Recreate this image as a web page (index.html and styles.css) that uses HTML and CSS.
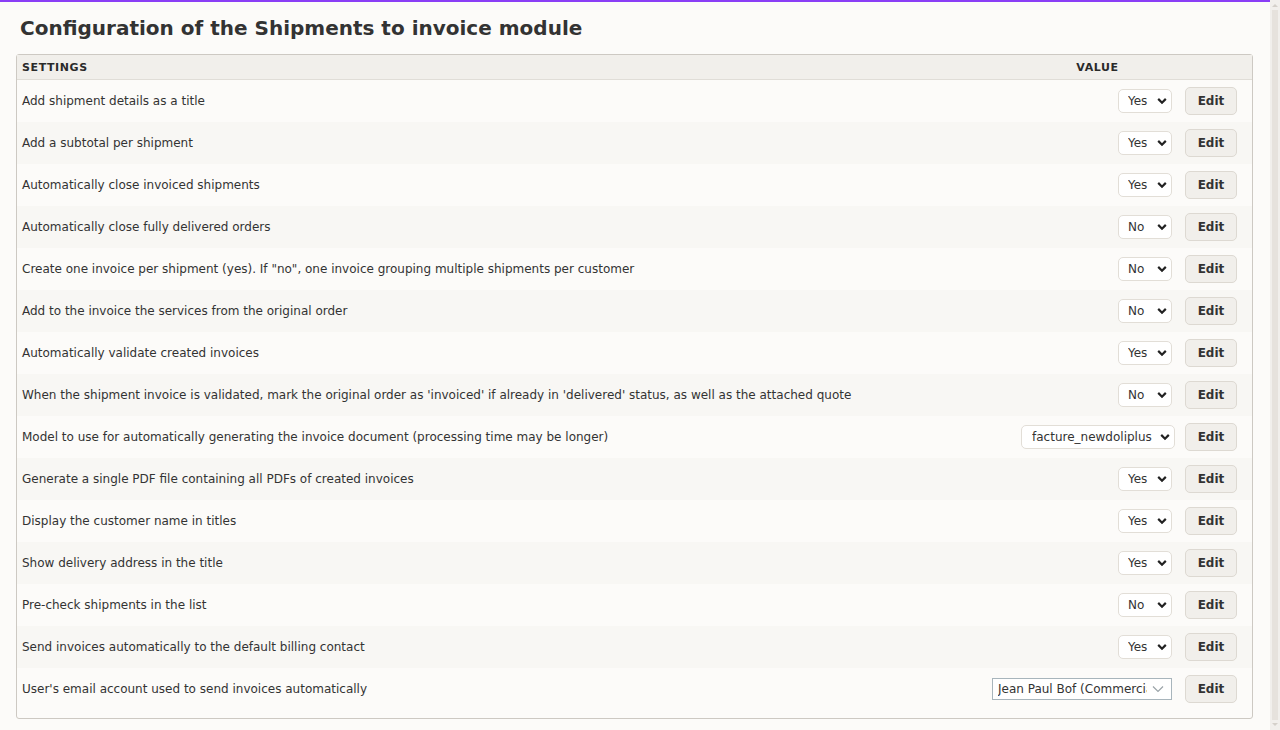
FILE: index.html
```html
<!DOCTYPE html>
<html lang="en">
<head>
<meta charset="utf-8">
<title>Configuration of the Shipments to invoice module</title>
<link rel="stylesheet" href="styles.css">
</head>
<body>
<div class="page">
  <main class="main">
    <h1 class="title">Configuration of the Shipments to invoice module</h1>
    <div class="box">
      <div class="thead">
        <div class="th th-label">Settings</div>
        <div class="th th-value">Value</div>
        <div class="th"></div>
      </div>

      <div class="row">
        <div class="label">Add shipment details as a title</div>
        <div class="value"><span class="sel"><select class="yn"><option>Yes</option><option>No</option></select><svg class="chev" width="10" height="7" viewBox="0 0 10 7"><path d="M1.2 1.4 5 5.2 8.8 1.4" fill="none" stroke="#222" stroke-width="2.2"/></svg></span></div>
        <div class="edit"><button class="btn">Edit</button></div>
      </div>
      <div class="row">
        <div class="label">Add a subtotal per shipment</div>
        <div class="value"><span class="sel"><select class="yn"><option>Yes</option><option>No</option></select><svg class="chev" width="10" height="7" viewBox="0 0 10 7"><path d="M1.2 1.4 5 5.2 8.8 1.4" fill="none" stroke="#222" stroke-width="2.2"/></svg></span></div>
        <div class="edit"><button class="btn">Edit</button></div>
      </div>
      <div class="row">
        <div class="label">Automatically close invoiced shipments</div>
        <div class="value"><span class="sel"><select class="yn"><option>Yes</option><option>No</option></select><svg class="chev" width="10" height="7" viewBox="0 0 10 7"><path d="M1.2 1.4 5 5.2 8.8 1.4" fill="none" stroke="#222" stroke-width="2.2"/></svg></span></div>
        <div class="edit"><button class="btn">Edit</button></div>
      </div>
      <div class="row">
        <div class="label">Automatically close fully delivered orders</div>
        <div class="value"><span class="sel"><select class="yn"><option>No</option><option>Yes</option></select><svg class="chev" width="10" height="7" viewBox="0 0 10 7"><path d="M1.2 1.4 5 5.2 8.8 1.4" fill="none" stroke="#222" stroke-width="2.2"/></svg></span></div>
        <div class="edit"><button class="btn">Edit</button></div>
      </div>
      <div class="row">
        <div class="label">Create one invoice per shipment (yes). If "no", one invoice grouping multiple shipments per customer</div>
        <div class="value"><span class="sel"><select class="yn"><option>No</option><option>Yes</option></select><svg class="chev" width="10" height="7" viewBox="0 0 10 7"><path d="M1.2 1.4 5 5.2 8.8 1.4" fill="none" stroke="#222" stroke-width="2.2"/></svg></span></div>
        <div class="edit"><button class="btn">Edit</button></div>
      </div>
      <div class="row">
        <div class="label">Add to the invoice the services from the original order</div>
        <div class="value"><span class="sel"><select class="yn"><option>No</option><option>Yes</option></select><svg class="chev" width="10" height="7" viewBox="0 0 10 7"><path d="M1.2 1.4 5 5.2 8.8 1.4" fill="none" stroke="#222" stroke-width="2.2"/></svg></span></div>
        <div class="edit"><button class="btn">Edit</button></div>
      </div>
      <div class="row">
        <div class="label">Automatically validate created invoices</div>
        <div class="value"><span class="sel"><select class="yn"><option>Yes</option><option>No</option></select><svg class="chev" width="10" height="7" viewBox="0 0 10 7"><path d="M1.2 1.4 5 5.2 8.8 1.4" fill="none" stroke="#222" stroke-width="2.2"/></svg></span></div>
        <div class="edit"><button class="btn">Edit</button></div>
      </div>
      <div class="row">
        <div class="label">When the shipment invoice is validated, mark the original order as 'invoiced' if already in 'delivered' status, as well as the attached quote</div>
        <div class="value"><span class="sel"><select class="yn"><option>No</option><option>Yes</option></select><svg class="chev" width="10" height="7" viewBox="0 0 10 7"><path d="M1.2 1.4 5 5.2 8.8 1.4" fill="none" stroke="#222" stroke-width="2.2"/></svg></span></div>
        <div class="edit"><button class="btn">Edit</button></div>
      </div>
      <div class="row">
        <div class="label">Model to use for automatically generating the invoice document (processing time may be longer)</div>
        <div class="value value-wide"><span class="sel"><select class="model"><option>facture_newdoliplus</option></select><svg class="chev" width="10" height="7" viewBox="0 0 10 7"><path d="M1.2 1.4 5 5.2 8.8 1.4" fill="none" stroke="#222" stroke-width="2.2"/></svg></span></div>
        <div class="edit"><button class="btn">Edit</button></div>
      </div>
      <div class="row">
        <div class="label">Generate a single PDF file containing all PDFs of created invoices</div>
        <div class="value"><span class="sel"><select class="yn"><option>Yes</option><option>No</option></select><svg class="chev" width="10" height="7" viewBox="0 0 10 7"><path d="M1.2 1.4 5 5.2 8.8 1.4" fill="none" stroke="#222" stroke-width="2.2"/></svg></span></div>
        <div class="edit"><button class="btn">Edit</button></div>
      </div>
      <div class="row">
        <div class="label">Display the customer name in titles</div>
        <div class="value"><span class="sel"><select class="yn"><option>Yes</option><option>No</option></select><svg class="chev" width="10" height="7" viewBox="0 0 10 7"><path d="M1.2 1.4 5 5.2 8.8 1.4" fill="none" stroke="#222" stroke-width="2.2"/></svg></span></div>
        <div class="edit"><button class="btn">Edit</button></div>
      </div>
      <div class="row">
        <div class="label">Show delivery address in the title</div>
        <div class="value"><span class="sel"><select class="yn"><option>Yes</option><option>No</option></select><svg class="chev" width="10" height="7" viewBox="0 0 10 7"><path d="M1.2 1.4 5 5.2 8.8 1.4" fill="none" stroke="#222" stroke-width="2.2"/></svg></span></div>
        <div class="edit"><button class="btn">Edit</button></div>
      </div>
      <div class="row">
        <div class="label">Pre-check shipments in the list</div>
        <div class="value"><span class="sel"><select class="yn"><option>No</option><option>Yes</option></select><svg class="chev" width="10" height="7" viewBox="0 0 10 7"><path d="M1.2 1.4 5 5.2 8.8 1.4" fill="none" stroke="#222" stroke-width="2.2"/></svg></span></div>
        <div class="edit"><button class="btn">Edit</button></div>
      </div>
      <div class="row">
        <div class="label">Send invoices automatically to the default billing contact</div>
        <div class="value"><span class="sel"><select class="yn"><option>Yes</option><option>No</option></select><svg class="chev" width="10" height="7" viewBox="0 0 10 7"><path d="M1.2 1.4 5 5.2 8.8 1.4" fill="none" stroke="#222" stroke-width="2.2"/></svg></span></div>
        <div class="edit"><button class="btn">Edit</button></div>
      </div>
      <div class="row">
        <div class="label">User's email account used to send invoices automatically</div>
        <div class="value"><span class="sel"><select class="user"><option>Jean Paul Bof (Commercial)</option></select><svg class="chev chev-thin" width="12" height="7" viewBox="0 0 12 7"><path d="M1 1 6 6 11 1" fill="none" stroke="#9aa3a8" stroke-width="1.2"/></svg></span></div>
        <div class="edit"><button class="btn">Edit</button></div>
      </div>
    </div>
  </main>
  <div class="scrollbar">
    <div class="sb-arrow sb-up"></div>
    <div class="sb-thumb"></div>
    <div class="sb-arrow sb-down"></div>
  </div>
</div>
</body>
</html>
```

FILE: styles.css
```css
html, body {
  margin: 0;
  padding: 0;
}
body {
  background: #fcfbf9;
  font-family: "DejaVu Sans", "Noto Sans", sans-serif;
  color: #333;
}
.page {
  display: flex;
  height: 730px;
  overflow: hidden;
}
.main {
  flex: 1;
  min-width: 0;
  border-top: 2px solid #8a3ef6;
  padding: 0 17px 0 16px;
}
.title {
  margin: 14px 0 14px 4px;
  font-size: 20px;
  line-height: 24px;
  font-weight: bold;
  color: #333;
}
.box {
  border: 1px solid #cdc9c3;
  border-radius: 3px;
  padding-bottom: 8px;
  background: #fcfbf9;
}
.thead,
.row {
  display: grid;
  grid-template-columns: 1fr 175px 67px;
  align-items: center;
}
.thead {
  height: 24px;
  background: #f1efeb;
  border-bottom: 1px solid #e0ddd7;
}
.th {
  font-size: 11px;
  font-weight: bold;
  text-transform: uppercase;
  letter-spacing: 0.6px;
  color: #2a2a2a;
}
.th-label {
  padding-left: 5px;
}
.th-value {
  text-align: center;
}
.row {
  height: 42px;
  background: #fcfbf9;
}
.row:nth-child(odd) {
  background: #f8f7f4;
}
.label {
  padding-left: 5px;
  font-size: 12px;
  color: #333;
  white-space: nowrap;
}
.value {
  display: flex;
  justify-content: flex-end;
  padding-right: 13px;
}
.value-wide {
  padding-right: 10px;
}
.edit {
  display: flex;
  justify-content: flex-end;
  padding-right: 15px;
}
.sel {
  position: relative;
  display: inline-flex;
}
select {
  -webkit-appearance: none;
  appearance: none;
  font-family: "DejaVu Sans", "Noto Sans", sans-serif;
  font-size: 12px;
  color: #333;
  background: #fff;
  margin: 0;
  outline: none;
}
.yn {
  width: 54px;
  height: 24px;
  border: 1px solid #e2ded7;
  border-radius: 5px;
  padding: 0 0 0 9px;
}
.model {
  width: 154px;
  height: 24px;
  border: 1px solid #e2ded7;
  border-radius: 5px;
  padding: 0 20px 0 10px;
}
.user {
  width: 180px;
  height: 22px;
  border: 1px solid #a8b5bc;
  border-radius: 0;
  padding: 0 24px 0 5px;
  color: #333;
}
.chev {
  position: absolute;
  right: 5px;
  top: 50%;
  transform: translateY(-50%);
  pointer-events: none;
}
.chev-thin {
  right: 8px;
}
.btn {
  width: 52px;
  height: 28px;
  background: #f1efeb;
  border: 1px solid #ddd9d2;
  border-radius: 5px;
  font-family: "DejaVu Sans", "Noto Sans", sans-serif;
  font-size: 12px;
  font-weight: bold;
  color: #333;
  padding: 0;
}
.scrollbar {
  width: 10px;
  flex: none;
  background: #f1efec;
  display: flex;
  flex-direction: column;
  align-items: center;
  padding: 4px 0;
  box-sizing: border-box;
}
.sb-arrow {
  width: 0;
  height: 0;
  border-left: 3px solid transparent;
  border-right: 3px solid transparent;
}
.sb-up {
  border-bottom: 3px solid #d4d0ca;
  margin-bottom: 3px;
}
.sb-down {
  border-top: 3px solid #d4d0ca;
  margin-top: 3px;
}
.sb-thumb {
  flex: 1;
  width: 6px;
  background: #e6e2dd;
}
```
